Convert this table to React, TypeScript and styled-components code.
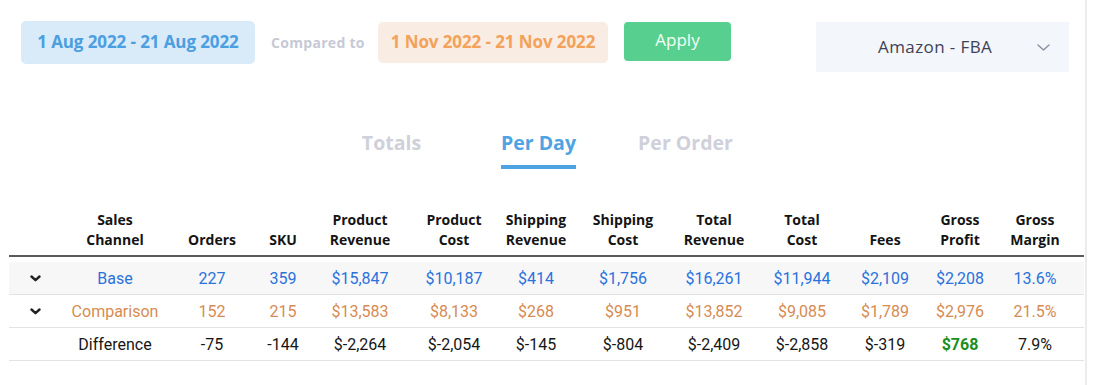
import React, { useState } from 'react';
import styled, { createGlobalStyle } from 'styled-components';

const GlobalStyle = createGlobalStyle`
  body {
    margin: 0;
    background: #ffffff;
    font-family: 'Open Sans', 'Liberation Sans', sans-serif;
  }
  * { box-sizing: border-box; }
`;

// shared column widths for header and body rows
const COLUMNS = '53px 106px 88px 54px 100px 88px 76px 98px 84px 92px 74px 76px 86px';

const Card = styled.div`
  width: 1087px;
  height: 385px;
  padding-left: 9px;
  border-right: 2px solid #ececec;
  background: #fff;
`;

const Toolbar = styled.div`
  display: flex;
  align-items: flex-start;
  padding: 21px 0 0 12px;
`;

const DateRange = styled.div<{ $tone: 'blue' | 'orange' }>`
  display: flex;
  align-items: center;
  justify-content: center;
  width: ${({ $tone }) => ($tone === 'blue' ? '234px' : '230px')};
  height: ${({ $tone }) => ($tone === 'blue' ? '43px' : '41px')};
  margin-top: ${({ $tone }) => ($tone === 'blue' ? '0' : '1px')};
  padding-bottom: 2px;
  border-radius: 5px;
  background: ${({ $tone }) => ($tone === 'blue' ? '#d9eaf9' : '#f8ece3')};
  color: ${({ $tone }) => ($tone === 'blue' ? '#4b9fe1' : '#f4a25a')};
  font-size: 17px;
  font-weight: 700;
  letter-spacing: -0.1px;
`;

const ComparedTo = styled.span`
  width: 95px;
  margin: 0 12px 0 16px;
  line-height: 43px;
  color: #c6c9d6;
  font-size: 14px;
  font-weight: 700;
  letter-spacing: 0.3px;
  white-space: nowrap;
`;

const ApplyButton = styled.button`
  width: 107px;
  height: 39px;
  margin: 1px 0 0 16px;
  padding: 0 0 4px;
  border: none;
  border-radius: 4px;
  background: #57cf8f;
  color: #f4fff8;
  font-family: 'Open Sans', 'Liberation Sans', sans-serif;
  font-size: 17px;
  cursor: pointer;
`;

const Select = styled.div`
  display: flex;
  align-items: center;
  width: 253px;
  height: 50px;
  margin: 1px 0 0 85px;
  padding: 0 19px 0 62px;
  background: #f3f6fa;
  color: #3f4256;
  font-size: 17px;
  letter-spacing: 0.4px;
`;

const SelectLabel = styled.span`
  flex: 1;
  margin-bottom: 2px;
`;

const Tabs = styled.div`
  display: flex;
  margin: 59px 0 0 309px;
`;

const Tab = styled.button<{ $active: boolean }>`
  display: flex;
  justify-content: center;
  width: 147px;
  padding: 0;
  border: none;
  background: none;
  cursor: pointer;
  font-family: 'Open Sans', 'Liberation Sans', sans-serif;
  font-size: 19.5px;
  font-weight: 700;
  line-height: 24px;
  color: ${({ $active }) => ($active ? '#4ea3e2' : '#cfd0da')};
`;

const TabLabel = styled.span<{ $active: boolean }>`
  padding-bottom: 10px;
  border-bottom: 4px solid ${({ $active }) => ($active ? '#4ea3e2' : 'transparent')};
`;

const Table = styled.div`
  width: 1075px;
  margin-top: 41px;
`;

const HeaderRow = styled.div`
  display: grid;
  grid-template-columns: ${COLUMNS};
  align-items: end;
  padding-bottom: 5px;
  border-bottom: 2px solid #5a5a5a;
`;

const HeaderCell = styled.div`
  text-align: center;
  color: #141414;
  font-size: 14px;
  font-weight: 700;
  line-height: 20px;
  &:last-child { padding-right: 12px; }
`;

const Body = styled.div`
  padding-top: 5px;
`;

const toneColor = {
  base: '#2a72dc',
  comparison: '#d68b52',
  difference: '#161616',
};

const Row = styled.div<{ $tone: keyof typeof toneColor }>`
  display: grid;
  grid-template-columns: ${COLUMNS};
  align-items: center;
  height: 33px;
  border-bottom: 1px solid #e2e2e2;
  background: ${({ $tone }) => ($tone === 'base' ? '#f7f7f7' : '#fff')};
  color: ${({ $tone }) => toneColor[$tone]};
  font-family: Roboto, 'Liberation Sans', sans-serif;
  font-size: 16px;
`;

const Cell = styled.div<{ $good?: boolean }>`
  text-align: center;
  ${({ $good }) => $good && 'color: #1b8f1b; font-weight: 700;'}
  &:last-child { padding-right: 12px; }
`;

const ToggleCell = styled.div`
  display: flex;
  justify-content: center;
  padding-right: 1px;
  cursor: pointer;
`;

const RowChevron = () => (
  <svg width="11" height="7" viewBox="0 0 11 7">
    <polyline points="1.5,1.5 5.5,5.2 9.5,1.5" fill="none" stroke="#222" strokeWidth="2.4" strokeLinecap="round" strokeLinejoin="round" />
  </svg>
);

const SelectChevron = () => (
  <svg width="13" height="7" viewBox="0 0 13 7">
    <polyline points="1,1 6.5,6 12,1" fill="none" stroke="#8c90a1" strokeWidth="1.4" strokeLinecap="round" strokeLinejoin="round" />
  </svg>
);

const headers = [
  '',
  'Sales\nChannel',
  'Orders',
  'SKU',
  'Product\nRevenue',
  'Product\nCost',
  'Shipping\nRevenue',
  'Shipping\nCost',
  'Total\nRevenue',
  'Total\nCost',
  'Fees',
  'Gross\nProfit',
  'Gross\nMargin',
];

type Line = {
  tone: keyof typeof toneColor;
  label: string;
  expandable: boolean;
  values: string[];
};

const lines: Line[] = [
  {
    tone: 'base',
    label: 'Base',
    expandable: true,
    values: ['227', '359', '$15,847', '$10,187', '$414', '$1,756', '$16,261', '$11,944', '$2,109', '$2,208', '13.6%'],
  },
  {
    tone: 'comparison',
    label: 'Comparison',
    expandable: true,
    values: ['152', '215', '$13,583', '$8,133', '$268', '$951', '$13,852', '$9,085', '$1,789', '$2,976', '21.5%'],
  },
  {
    tone: 'difference',
    label: 'Difference',
    expandable: false,
    values: ['-75', '-144', '$-2,264', '$-2,054', '$-145', '$-804', '$-2,409', '$-2,858', '$-319', '$768', '7.9%'],
  },
];

const tabs = ['Totals', 'Per Day', 'Per Order'];

export default function App() {
  const [tab, setTab] = useState('Per Day');

  return (
    <Card>
      <GlobalStyle />
      <Toolbar>
        <DateRange $tone="blue">1 Aug 2022 - 21 Aug 2022</DateRange>
        <ComparedTo>Compared to</ComparedTo>
        <DateRange $tone="orange">1 Nov 2022 - 21 Nov 2022</DateRange>
        <ApplyButton>Apply</ApplyButton>
        <Select>
          <SelectLabel>Amazon - FBA</SelectLabel>
          <SelectChevron />
        </Select>
      </Toolbar>

      <Tabs>
        {tabs.map((t) => (
          <Tab key={t} $active={t === tab} onClick={() => setTab(t)}>
            <TabLabel $active={t === tab}>{t}</TabLabel>
          </Tab>
        ))}
      </Tabs>

      <Table>
        <HeaderRow>
          {headers.map((h, i) => (
            <HeaderCell key={i}>
              {h.split('\n').map((part) => (
                <div key={part}>{part}</div>
              ))}
            </HeaderCell>
          ))}
        </HeaderRow>
        <Body>
          {lines.map((line) => (
            <Row key={line.label} $tone={line.tone}>
              <ToggleCell>{line.expandable && <RowChevron />}</ToggleCell>
              <Cell>{line.label}</Cell>
              {line.values.map((v, i) => (
                <Cell key={i} $good={line.tone === 'difference' && i === 9}>
                  {v}
                </Cell>
              ))}
            </Row>
          ))}
        </Body>
      </Table>
    </Card>
  );
}
